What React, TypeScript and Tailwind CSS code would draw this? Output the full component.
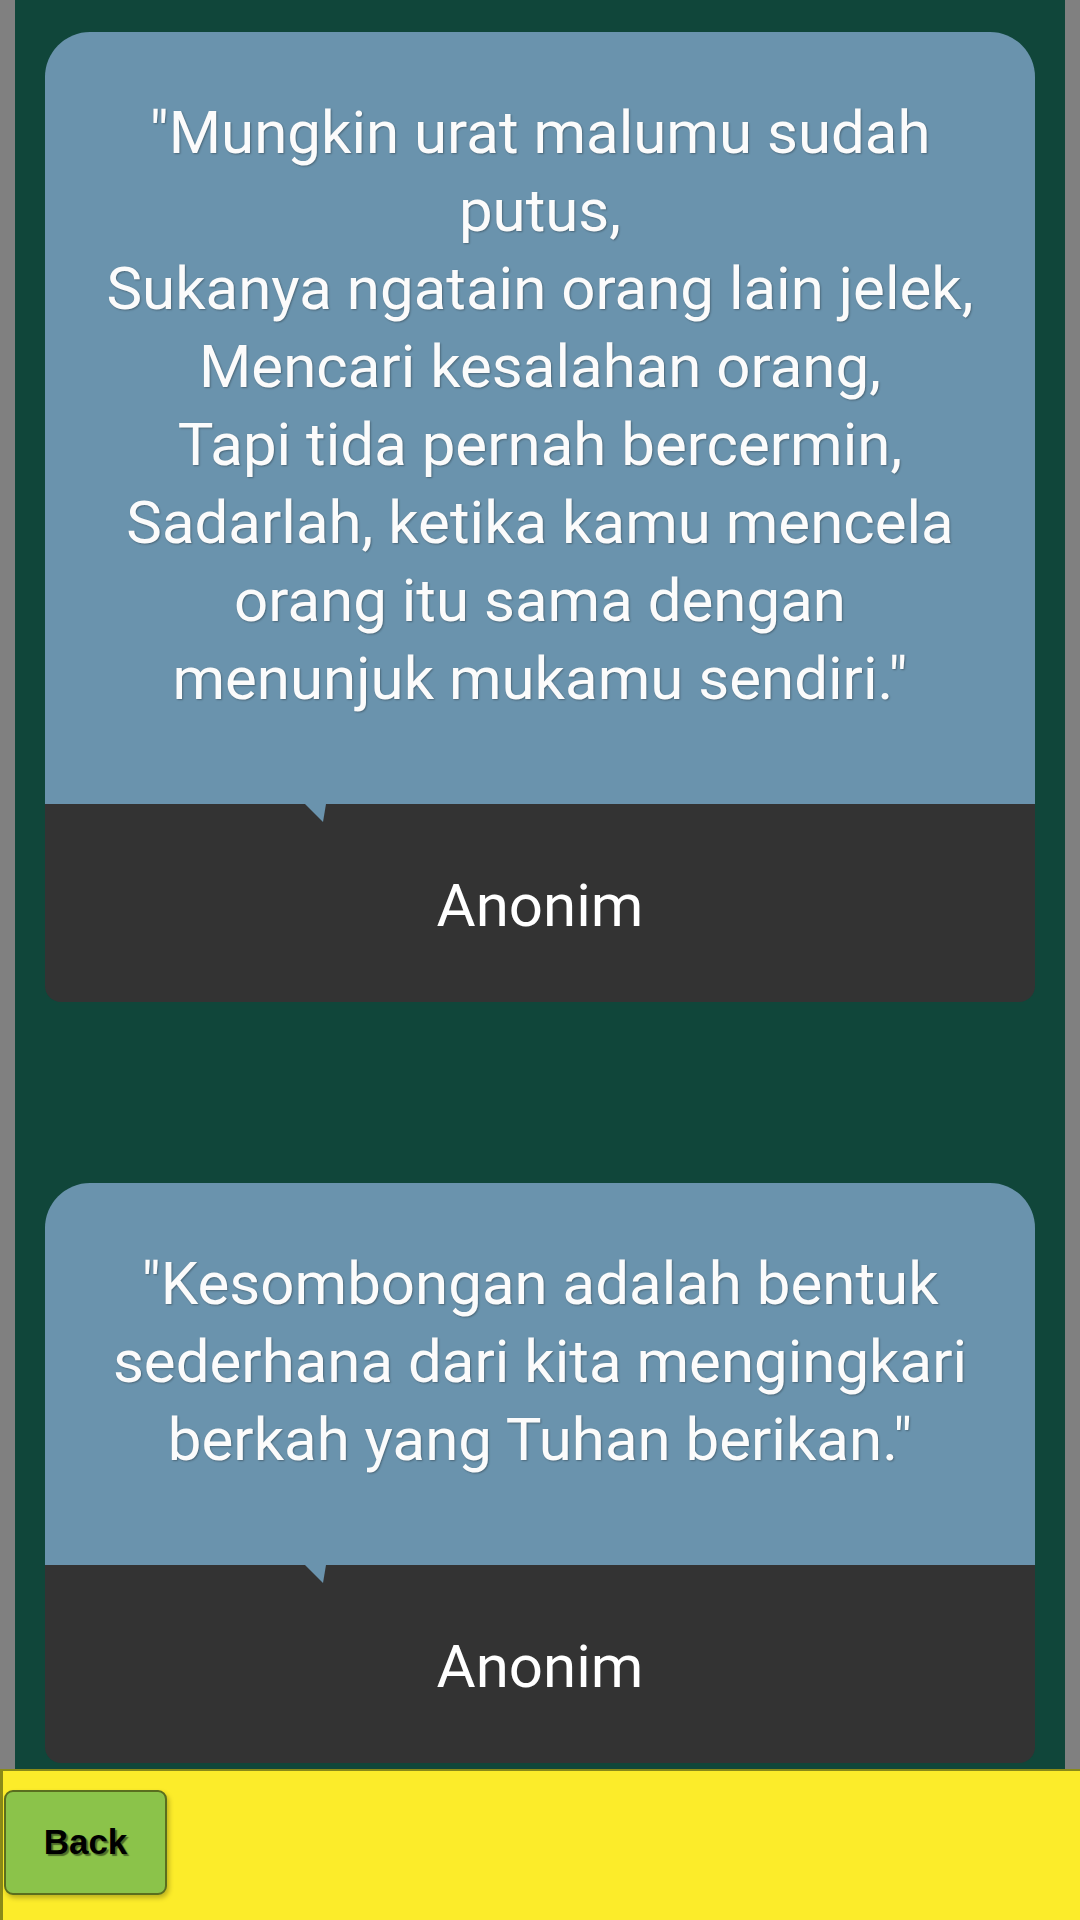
const quotes = [
  {
    lines: [
      "\"Mungkin urat malumu sudah",
      "putus,",
      "Sukanya ngatain orang lain jelek,",
      "Mencari kesalahan orang,",
      "Tapi tida pernah bercermin,",
      "Sadarlah, ketika kamu mencela",
      "orang itu sama dengan",
      "menunjuk mukamu sendiri.\"",
    ],
    author: "Anonim",
  },
  {
    lines: [
      "\"Kesombongan adalah bentuk",
      "sederhana dari kita mengingkari",
      "berkah yang Tuhan berikan.\"",
    ],
    author: "Anonim",
  },
];

function QuoteCard({ lines, author }: { lines: string[]; author: string }) {
  return (
    <div className="mx-[30px] flex flex-col">
      <div className="rounded-t-[45px] bg-[#6a93ad] px-[20px] pt-[62px] pb-[86px] text-center text-[60px] leading-[78px] text-[#fbfbfb] [text-shadow:1px_1px_2px_rgba(0,0,0,0.3)]">
        {lines.map((line) => (
          <div key={line} className="whitespace-nowrap">
            {line}
          </div>
        ))}
      </div>
      <div className="relative rounded-b-[16px] bg-[#333333] pt-[67px] pb-[61px] text-center text-[60px] leading-[70px] text-white">
        <svg className="absolute left-[260px] top-0" width="22" height="18" viewBox="0 0 22 18">
          <polygon points="0,0 21,0 18,18" fill="#6a93ad" />
        </svg>
        {author}
      </div>
    </div>
  );
}

export default function App() {
  return (
    <div className="flex h-[1920px] w-[1080px] flex-col bg-[#808080] font-['Roboto',sans-serif]">
      <div className="mx-[15px] flex flex-1 flex-col gap-[181px] bg-[#10463a] pt-[32px] pb-[5px]">
        {quotes.map((quote, i) => (
          <QuoteCard key={i} lines={quote.lines} author={quote.author} />
        ))}
      </div>
      <footer className="h-[151px] shrink-0 border-t-2 border-l-[3px] border-[#8a8a18] bg-[#fcec2a] pt-[19px] pl-[1px]">
        <button className="flex h-[105px] w-[163px] items-center justify-center rounded-[9px] border-2 border-[#5a6e1e] bg-[#8bc34a] font-['Liberation_Sans',sans-serif] text-[35px] font-bold text-black shadow-[2px_3px_5px_rgba(0,0,0,0.25)] [text-shadow:2px_2px_1px_rgba(0,0,0,0.45)]">
          Back
        </button>
      </footer>
    </div>
  );
}
